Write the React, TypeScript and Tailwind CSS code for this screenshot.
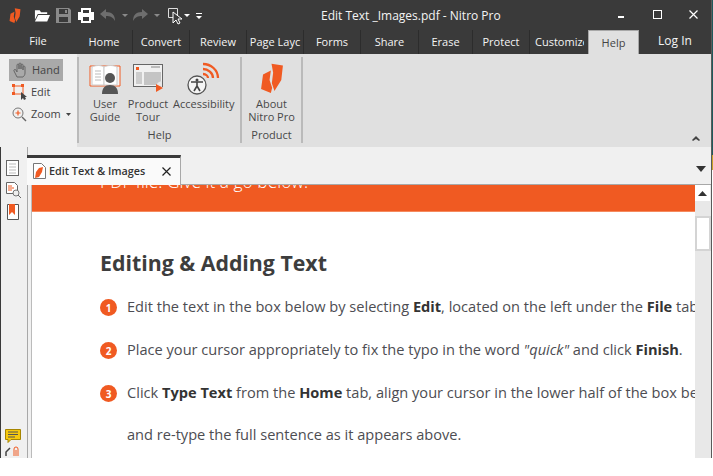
import React from "react";

function Logo({ w = 12, h = 15 }: { w?: number; h?: number }) {
  return (
    <svg width={w} height={h} viewBox="0 0 67 92">
      <path d="M32 2 L67 8 L62 52 L41 86 L33 62 L37 30 Z" fill="#f05a22" />
      <path d="M6 35 L30 23 L26 52 L34 76 L30 92 L0 80 Z" fill="#f05a22" />
    </svg>
  );
}

function Tab({ label, w }: { label: string; w: string }) {
  return (
    <div className={`${w} h-full flex items-center justify-center overflow-hidden whitespace-nowrap text-[#f4f4f4] text-[11px] border-r border-[#2c2c2c] pt-[1px]`}>
      {label}
    </div>
  );
}

function Step({ n, children }: { n: number; children: React.ReactNode }) {
  return (
    <div className="flex items-center gap-[10px] whitespace-nowrap">
      <div className="w-[17px] h-[17px] mt-[3px] rounded-full bg-[#f05a22] text-white text-[10px] font-bold flex items-center justify-center shrink-0">{n}</div>
      <div>{children}</div>
    </div>
  );
}

export default function App() {
  return (
    <div className="w-[713px] h-[476px] bg-white overflow-hidden font-['Open_Sans','Noto_Sans',sans-serif]">
      <div className="h-[458px] w-[713px] flex overflow-hidden">
        <div className="w-[711px] h-full flex flex-col overflow-hidden shrink-0">
          {/* title */}
          <div className="h-[30px] bg-[#3a3a3a] flex items-center relative shrink-0">
            <div className="ml-[9px] flex"><Logo /></div>
            <svg className="ml-[13px]" width="16" height="14" viewBox="0 0 17 14"><path d="M1 2h5l1.500 2H14v2H4L1 12Z M4.500 7H17l-3 7H1Z" fill="#fff"/></svg>
            <svg className="ml-[6px]" width="15" height="15" viewBox="0 0 15 15"><path fillRule="evenodd" d="M0 0h13l2 2v13H0Z M3 1v5h9V1Z M3 9v5h9V9Z M9 2h2v3H9Z" fill="#8a8a8a"/></svg>
            <svg className="ml-[7px]" width="16" height="15" viewBox="0 0 16 15"><path fillRule="evenodd" d="M3 0h10v4h3v8h-3v3H3v-3H0V4h3Z M5 2v3h6V2Z M5 9v4h6V9Z" fill="#fff"/></svg>
            <svg className="ml-[6px]" width="15" height="12" viewBox="0 0 15 12"><path d="M6 0v3c6 0 9 3 9 9-2-4-5-5-9-5v3L0 5Z" fill="#6e6e6e"/></svg>
            <svg className="ml-[7px] mt-[1px]" width="6" height="3" viewBox="0 0 6 3"><path d="M0 0h6L3 3Z" fill="#8a8a8a"/></svg>
            <svg className="ml-[5px]" width="15" height="12" viewBox="0 0 15 12"><path d="M9 0v3C3 3 0 6 0 12c2-4 5-5 9-5v3l6-5Z" fill="#6e6e6e"/></svg>
            <svg className="ml-[6px] mt-[1px]" width="6" height="3" viewBox="0 0 6 3"><path d="M0 0h6L3 3Z" fill="#8a8a8a"/></svg>
            <svg className="ml-[8px] mt-[2px]" width="16" height="17" viewBox="0 0 16 17"><path d="M.5.500h9v9h-9Z" fill="none" stroke="#ddd"/><path d="M5 4v11l3-3 2 4 2-1-2-4h4Z" fill="#3a3a3a" stroke="#fff"/></svg>
            <svg className="mt-[1px]" width="6" height="3" viewBox="0 0 6 3"><path d="M0 0h6L3 3Z" fill="#fff"/></svg>
            <svg className="ml-[6px] mt-[2px]" width="6" height="6" viewBox="0 0 6 6"><path d="M0 0h6v1H0Z M0 3h6L3 6Z" fill="#fff"/></svg>
            <div className="absolute left-[321px] top-[7px] text-[12px] text-[#f4f4f4] whitespace-nowrap">Edit Text _Images.pdf - Nitro Pro</div>
            <div className="absolute left-[618px] top-[16px] w-[6px] h-[2px] bg-white" />
            <div className="absolute left-[653px] top-[10px] w-[9px] h-[9px] border border-white" />
            <svg className="absolute left-[689px] top-[10px]" width="9" height="9" viewBox="0 0 9 9"><path d="M0.500 0.500 8.500 8.500M8.500 0.500 0.500 8.500" stroke="#fff" strokeWidth="1.200"/></svg>
          </div>
          {/* tabs */}
          <div className="h-[24px] bg-[#3a3a3a] flex items-stretch shrink-0 text-[11px]">
            <div className="w-[76px] flex items-center justify-center text-[#f4f4f4] pb-[1px]">File</div>
            <Tab label="Home" w="w-[57px]" />
            <Tab label="Convert" w="w-[57px]" />
            <Tab label="Review" w="w-[57px]" />
            <Tab label="Page Layc" w="w-[57px]" />
            <Tab label="Forms" w="w-[57px]" />
            <Tab label="Share" w="w-[58px]" />
            <Tab label="Erase" w="w-[54px]" />
            <Tab label="Protect" w="w-[57px]" />
            <div className="w-[54px] mr-[4px] overflow-hidden whitespace-nowrap text-[#f4f4f4] pl-[5px] pt-[1px] flex items-center">Customize</div>
            <div className="w-[51px] h-[24px] bg-[#e0e0e0] border-t border-x border-[#a8a8a8] flex items-center justify-center text-[#444] pt-[1px]">Help</div>
            <div className="flex-1 flex items-center justify-center text-[12px] text-[#f4f4f4] pb-[3px]">Log In</div>
          </div>
          {/* ribbon */}
          <div className="h-[93px] flex shrink-0 bg-[#f0f0f0]">
            <div className="w-[77px] pt-[5px] pl-[9px] flex flex-col text-[11px] text-[#444]">
              <div className="w-[54px] h-[22px] bg-[#a9a9a9] flex items-center gap-[4px] pl-[4px]">
                <svg width="15" height="16" viewBox="0 0 15 16" fill="none" stroke="#666" strokeWidth="1"><path d="M4 15 1 9c-.7-1.500 1-2 2-1l1 2V3c0-1.200 2-1.200 2 0v4-5c0-1.300 2-1.300 2 0v5-4c0-1.200 2-1.200 2 0v5-3c0-1.200 2-1.200 2 0v6c0 2-1 3-2 4Z"/></svg>
                <span>Hand</span>
              </div>
              <div className="h-[22px] flex items-center gap-[4px] pl-[3px]">
                <svg width="15" height="16" viewBox="0 0 15 16"><rect x="2" y="2" width="9" height="8" fill="none" stroke="#f05a22"/><rect x="0" y="0" width="3" height="3" fill="#f05a22"/><rect x="9" y="0" width="3" height="3" fill="#f05a22"/><rect x="0" y="8" width="3" height="3" fill="#f05a22"/><path d="M9 8v8l2-2 1 2 2-1-1-2h2Z" fill="#444"/></svg>
                <span>Edit</span>
              </div>
              <div className="h-[22px] flex items-center gap-[4px] pl-[3px]">
                <svg width="15" height="15" viewBox="0 0 15 15" fill="none"><circle cx="6" cy="6" r="5" stroke="#777"/><path d="M3.500 6h5M6 3.500v5" stroke="#f05a22" strokeWidth="1.200"/><path d="M10 10l4 4" stroke="#666" strokeWidth="1.500"/></svg>
                <span>Zoom</span>
                <svg className="ml-[1px]" width="5" height="3" viewBox="0 0 5 3"><path d="M0 0h5L2.500 3Z" fill="#444"/></svg>
              </div>
            </div>
            <div className="flex-1 bg-[#e0e0e0] relative flex text-[11px] text-[#484848] leading-[13px]">
              {/* help */}
              <div className="w-[165px] h-[86px] flex flex-col border-x-2 border-[#bababa] mt-[3px]">
                <div className="flex h-[71px]">
                  <div className="w-[50px] ml-[1px] flex flex-col items-center">
                    <svg className="mt-[7px]" width="32" height="30" viewBox="0 0 32 30" fill="none">
                      <path d="M1 2h30v20H1Z" fill="#f4f4f4" stroke="#f05a22"/>
                      <path d="M3 3c4-2 9-2 12 0v18H3Z" fill="#fff" stroke="#ccc"/>
                      <path d="M15 3c4-2 9-2 13 0v18H15Z" fill="#fff" stroke="#ccc"/>
                      <path d="M6 7h6M6 10h6M6 13h6M6 16h6" stroke="#bbb"/>
                      <circle cx="21" cy="14" r="5" fill="#555"/>
                      <path d="M13 30c0-6 3-9 8-9s8 3 8 9Z" fill="#555"/>
                    </svg>
                    <div className="mt-[3px] text-center">User<br />Guide</div>
                  </div>
                  <div className="w-[36px] flex flex-col items-center">
                    <svg className="mt-[7px] shrink-0" width="31" height="30" viewBox="0 0 31 30">
                      <rect x=".5" y=".5" width="29" height="22" fill="#f0f0f0" stroke="#666"/>
                      <rect x="3" y="3" width="3" height="3" fill="#f05a22"/>
                      <path d="M18 3h9" stroke="#888"/>
                      <rect x="3" y="8" width="6" height="12" fill="#ccc"/>
                      <rect x="11" y="8" width="17" height="13" fill="#c4c4c4"/>
                      <path d="M23 22a8 6 0 0 1 6-5v6Z" fill="#e8e8e8"/>
                      <path d="M23 20l7 4-7 4Z" fill="#f05a22"/>
                    </svg>
                    <div className="mt-[3px] text-center whitespace-nowrap">Product<br />Tour</div>
                  </div>
                  <div className="w-[61px] ml-[7px] flex flex-col">
                    <svg className="mt-[4px] ml-[11px]" width="38" height="34" viewBox="0 0 38 34" fill="none">
                      <path d="M19 3c8 0 15 6 15 14M19 8c5 0 10 4 10 9M19 13c3 0 5 2 5 4" stroke="#f05a22" strokeWidth="2.300"/>
                      <circle cx="13" cy="24" r="9" fill="#f4f4f4" stroke="#555" strokeWidth="1.300"/>
                      <circle cx="13" cy="19" r="1.500" fill="#444"/>
                      <path d="M7 21h12M13 21v5M13 25l-3 5M13 25l3 5" stroke="#444" strokeWidth="1.600"/>
                    </svg>
                    <div className="whitespace-nowrap mt-[2px] text-center">Accessibility</div>
                  </div>
                </div>
                <div className="text-center">Help</div>
              </div>
              {/* product */}
              <div className="w-[61px] h-[86px] flex flex-col border-r-2 border-[#bababa] mt-[3px] items-center">
                <div className="h-[71px] flex flex-col items-center">
                  <div className="mt-[6px] flex"><Logo w={22} h={30} /></div>
                  <div className="mt-[4px] text-center whitespace-nowrap">About<br />Nitro Pro</div>
                </div>
                <div>Product</div>
              </div>
              <svg className="absolute right-[11px] bottom-[6px]" width="8" height="5" viewBox="0 0 8 5"><path d="M0 4l4-4 4 4-1 1-3-2-3 2Z" fill="#444"/></svg>
            </div>
          </div>
          {/* document area */}
          <div className="flex-1 flex bg-[#f0f0f0] min-h-0 border-l border-[#3a3a3a]">
            <div className="w-[27px] border-r border-[#a8a8a8] flex flex-col pl-[4px] relative shrink-0 pt-[13px] gap-[6px]">
              <svg className="ml-[1px]" width="13" height="16" viewBox="0 0 13 16" fill="none"><rect x=".5" y=".5" width="12" height="15" fill="#fff" stroke="#666"/><path d="M3 4h7M3 7h7M3 10h7M3 13h7" stroke="#bbb"/></svg>
              <svg className="ml-[1px]" width="16" height="16" viewBox="0 0 16 16" fill="none"><path d="M.5.500h8l3 3v8h-11Z" fill="#fff" stroke="#666"/><path d="M2 4h4M2 6h6M2 8h4" stroke="#f05a22"/><circle cx="10" cy="11" r="3" fill="#eee" stroke="#777"/><path d="M12 13l3 3" stroke="#666"/></svg>
              <svg className="ml-[2px]" width="12" height="16" viewBox="0 0 12 16"><path d="M.5.500h11v15H.5Z" fill="#fff" stroke="#555"/><path d="M2 0h6v11l-3-3-3 3Z" fill="#f05a22"/></svg>
              <svg className="absolute left-[4px] top-[282px]" width="16" height="14" viewBox="0 0 16 14"><path d="M.5.500h15v10H6l-3 3v-3H.5Z" fill="#f6c90e" stroke="#a68500"/><path d="M3 3h10M3 5.500h10M3 8h7" stroke="#555"/></svg>
              <svg className="absolute left-[4px] top-[299px]" width="16" height="10" viewBox="0 0 16 10" fill="none"><path d="M1 10V6l4-4" stroke="#444" strokeWidth="1.500"/><path d="M9 10V3a2 2 0 0 1 4 0v7M11 4v6" stroke="#f05a22"/></svg>
            </div>
            <div className="flex-1 flex flex-col min-w-0">
              <div className="h-[38px] shrink-0 flex items-end relative border-b border-[#a8a8a8]">
                <div className="w-[154px] -ml-[1px] h-[30px] -mb-[1px] relative bg-[#fafafa] border-t-[3px] border-[#3a3a3a] border-r border-r-[#a8a8a8] flex items-center pl-[6px] pb-[1px]">
                  <svg width="13" height="16" viewBox="0 0 13 16"><path d="M.5.500h8l4 4v11H.5Z" fill="#fff" stroke="#777"/><path d="M6 5l4-1-1 5-3 5-4 1 1-6Z" fill="#f05a22"/></svg>
                  <span className="ml-[3px] text-[10.800px] text-[#333] font-semibold whitespace-nowrap">Edit Text &amp; Images</span>
                  <svg className="ml-[17px]" width="9" height="9" viewBox="0 0 9 9"><path d="M.5.500l8 8M8.500.500l-8 8" stroke="#222" strokeWidth="1.200"/></svg>
                </div>
                <svg className="absolute right-[5px] bottom-[12px]" width="10" height="6" viewBox="0 0 10 6"><path d="M0 0h10L5 6Z" fill="#333"/></svg>
              </div>
              <div className="flex-1 flex min-h-0">
                <div className="w-[3px] bg-[#f0f0f0] shrink-0" />
                <div className="flex-1 min-w-0 bg-white border-l border-[#bbb] overflow-hidden">
                  <div className="h-[27px] bg-[#f05a22] border-b border-[#f58a5e] overflow-hidden relative">
                    <div className="absolute left-[68px] top-[-16px] text-[17.400px] leading-[24px] font-light text-[#fff] whitespace-nowrap">PDF file. Give it a go below.</div>
                  </div>
                  <div className="pl-[68px] pt-[37px] text-[14.600px] text-[#4d4d52] w-[800px]">
                    <div className="text-[21.300px] leading-[28px] font-bold text-[#3d3d3d]">Editing &amp; Adding Text</div>
                    <div className="mt-[19px] flex flex-col gap-[23px] leading-[20px]">
                      <Step n={1}>Edit the text in the box below by selecting <b className="text-[#333]">Edit</b>, located on the left under the <b className="text-[#333]">File</b> tab</Step>
                      <Step n={2}>Place your cursor appropriately to fix the typo in the word <i>"quick"</i> and click <b className="text-[#333]">Finish</b>.</Step>
                      <Step n={3}>Click <b className="text-[#333]">Type Text</b> from the <b className="text-[#333]">Home</b> tab, align your cursor in the lower half of the box below</Step>
                      <div className="pl-[27px] -mt-[1px]">and re-type the full sentence as it appears above.</div>
                    </div>
                  </div>
                </div>
                <div className="w-[16px] bg-[#e8e8e8] shrink-0 flex flex-col items-start">
                  <div className="w-[15px] h-[16px] bg-white flex items-center justify-center">
                    <svg width="9" height="5" viewBox="0 0 9 5"><path d="M0 5h9L4.500 0Z" fill="#333"/></svg>
                  </div>
                  <div className="w-[16px] h-[35px] bg-white border-2 border-[#d4d4d4] mt-[15px]" />
                </div>
              </div>
            </div>
          </div>
        </div>
        <div className="w-[1px] h-full bg-[#5a5a5a] shrink-0" />
        <div className="w-[1px] h-full flex flex-col shrink-0">
          <div className="h-[155px] bg-[#1f5a5c]" />
          <div className="h-[15px] bg-[#c9a227]" />
        </div>
      </div>
    </div>
  );
}
